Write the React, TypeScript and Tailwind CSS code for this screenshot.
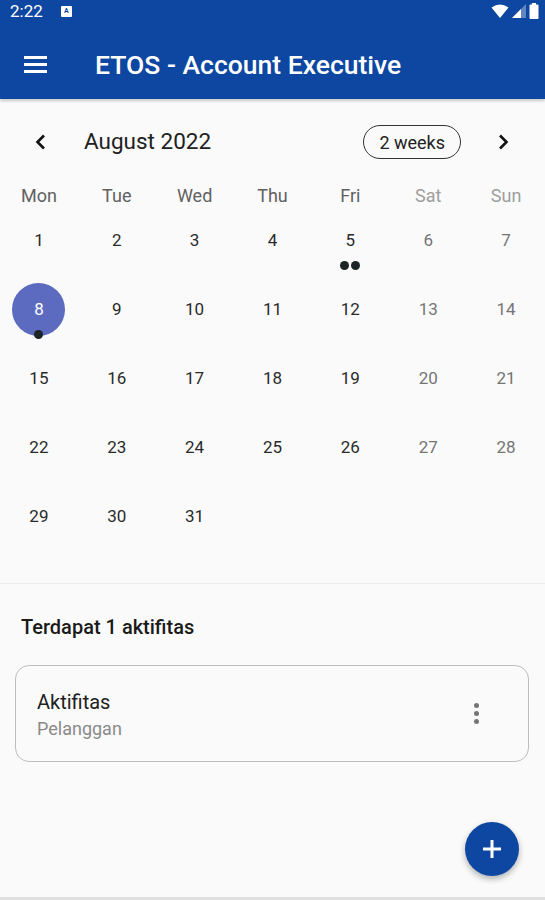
import React from "react";

const DAYS = ["Mon", "Tue", "Wed", "Thu", "Fri", "Sat", "Sun"];

const WEEKS: (number | null)[][] = [
  [1, 2, 3, 4, 5, 6, 7],
  [8, 9, 10, 11, 12, 13, 14],
  [15, 16, 17, 18, 19, 20, 21],
  [22, 23, 24, 25, 26, 27, 28],
  [29, 30, 31, null, null, null, null],
];

// number of events per date
const EVENTS: Record<number, number> = { 5: 2, 8: 1 };
const SELECTED = 8;

function StatusBar() {
  return (
    <div className="h-[30px] bg-[#0d47a1] text-white">
      <div className="h-[22px] flex items-center justify-between pl-[10px] pr-[6px]">
        <div className="flex items-center gap-[18px]">
          <span className="text-[17px] leading-none">2:22</span>
          <div className="w-[11px] h-[11px] bg-white rounded-[1px] flex items-center justify-center">
            <span className="text-[7px] leading-none font-bold text-[#0d47a1]">A</span>
          </div>
        </div>
        <div className="flex items-center gap-[3px]">
          <svg width="18" height="14" viewBox="0 0 18 14">
            <path d="M9 14 L0.5 3.5 Q9 -2.5 17.5 3.5 Z" fill="white" />
          </svg>
          <svg width="14" height="14" viewBox="0 0 14 14">
            <path d="M14 0 L14 14 L0 14 Z" fill="white" fillOpacity="0.35" />
            <path d="M9 5 L9 14 L0 14 Z" fill="white" />
          </svg>
          <svg width="10" height="16" viewBox="0 0 10 16">
            <rect x="3" y="0" width="4" height="2" fill="white" />
            <rect x="0.5" y="1.5" width="9" height="14.5" rx="1" fill="white" />
          </svg>
        </div>
      </div>
    </div>
  );
}

function AppBar() {
  return (
    <div className="h-[69px] bg-[#0d47a1] flex items-center shadow-[0_2px_3px_rgba(0,0,0,0.2)] relative z-10">
      <div className="w-[95px] pl-6 flex flex-col gap-[4px]">
        <div className="w-[23px] h-[3px] bg-white" />
        <div className="w-[23px] h-[3px] bg-white" />
        <div className="w-[23px] h-[3px] bg-white" />
      </div>
      <h1 className="text-white text-[26.5px] font-medium">
        ETOS - Account Executive
      </h1>
    </div>
  );
}

function Chevron({ dir }: { dir: "left" | "right" }) {
  return (
    <svg width="24" height="24" viewBox="0 0 24 24">
      <path
        d={dir === "left" ? "M15 5.5 L8.5 12 L15 18.5" : "M9 5.5 L15.5 12 L9 18.5"}
        fill="none"
        stroke="#111"
        strokeWidth="2.6"
      />
    </svg>
  );
}

function Calendar() {
  return (
    <div>
      <div className="h-14 mt-[15px] flex items-center pl-[29px] pr-[30px]">
        <Chevron dir="left" />
        <span className="ml-[31px] text-[22.5px] text-[#212121]">August 2022</span>
        <div className="flex-1" />
        <div className="h-[34px] px-[15px] border-[1.5px] border-[#333] rounded-full flex items-center text-[18px] text-[#212121]">
          2 weeks
        </div>
        <div className="ml-[30px]">
          <Chevron dir="right" />
        </div>
      </div>

      <div className="grid grid-cols-7 h-[37px] mt-[7px] items-center">
        {DAYS.map((d, i) => (
          <div
            key={d}
            className={`text-center text-[18px] pb-px ${i >= 5 ? "text-[#9e9e9e]" : "text-[#616161]"}`}
          >
            {d}
          </div>
        ))}
      </div>

      {WEEKS.map((week, wi) => (
        <div key={wi} className="grid grid-cols-7">
          {week.map((day, di) => {
            const isSel = day === SELECTED;
            const dots = day ? EVENTS[day] ?? 0 : 0;
            return (
              <div key={di} className="h-[69px] flex flex-col items-center">
                {day && (
                  <>
                    <div
                      className={`w-[53px] h-[53px] rounded-full flex items-center justify-center text-[17px] ${
                        isSel
                          ? "bg-[#5c6bc0] text-white"
                          : di >= 5
                          ? "text-[#757575]"
                          : "text-[#2a2a2a]"
                      }`}
                    >
                      {day}
                    </div>
                    <div className="h-[9px] -mt-[6px] flex gap-[2px]">
                      {Array.from({ length: dots }).map((_, k) => (
                        <div key={k} className="w-[9px] h-[9px] rounded-full bg-[#1c2426]" />
                      ))}
                    </div>
                  </>
                )}
              </div>
            );
          })}
        </div>
      ))}
    </div>
  );
}

function ActivityCard() {
  return (
    <div className="ml-[15px] mr-4 mt-[26px] h-[97px] border border-[#bdbdbd] rounded-[14px] flex items-center pl-[21px] pr-[49px]">
      <div className="flex-1 flex flex-col pt-[4px]">
        <span className="text-[20px] leading-6 text-[#212121]">Aktifitas</span>
        <span className="text-[18px] leading-6 mt-[3px] text-[#8a8a8a]">Pelanggan</span>
      </div>
      <div className="flex flex-col gap-[3px]">
        <div className="w-[5px] h-[5px] rounded-full bg-[#757575]" />
        <div className="w-[5px] h-[5px] rounded-full bg-[#757575]" />
        <div className="w-[5px] h-[5px] rounded-full bg-[#757575]" />
      </div>
    </div>
  );
}

export default function App() {
  return (
    <div
      className="w-[545px] h-[900px] bg-[#fafafa] relative overflow-hidden flex flex-col"
      style={{ fontFamily: "Roboto, 'Noto Sans', sans-serif" }}
    >
      <StatusBar />
      <AppBar />
      <Calendar />

      <div className="mt-[24px] h-px bg-[#ececec]" />

      <h2 className="mt-[31px] ml-[21px] text-[20px] leading-6 font-medium text-[#1a1a1a]">
        Terdapat 1 aktifitas
      </h2>

      <ActivityCard />

      <div className="flex-1" />
      <div className="h-[3px] bg-[#e0e0e0]" />

      <button className="absolute right-[26px] bottom-[24px] w-[54px] h-[54px] rounded-full bg-[#0d47a1] flex items-center justify-center shadow-[0_3px_6px_rgba(0,0,0,0.3)]">
        <svg width="22" height="22" viewBox="0 0 22 22">
          <path d="M11 2 V20 M2 11 H20" stroke="white" strokeWidth="3" />
        </svg>
      </button>
    </div>
  );
}
